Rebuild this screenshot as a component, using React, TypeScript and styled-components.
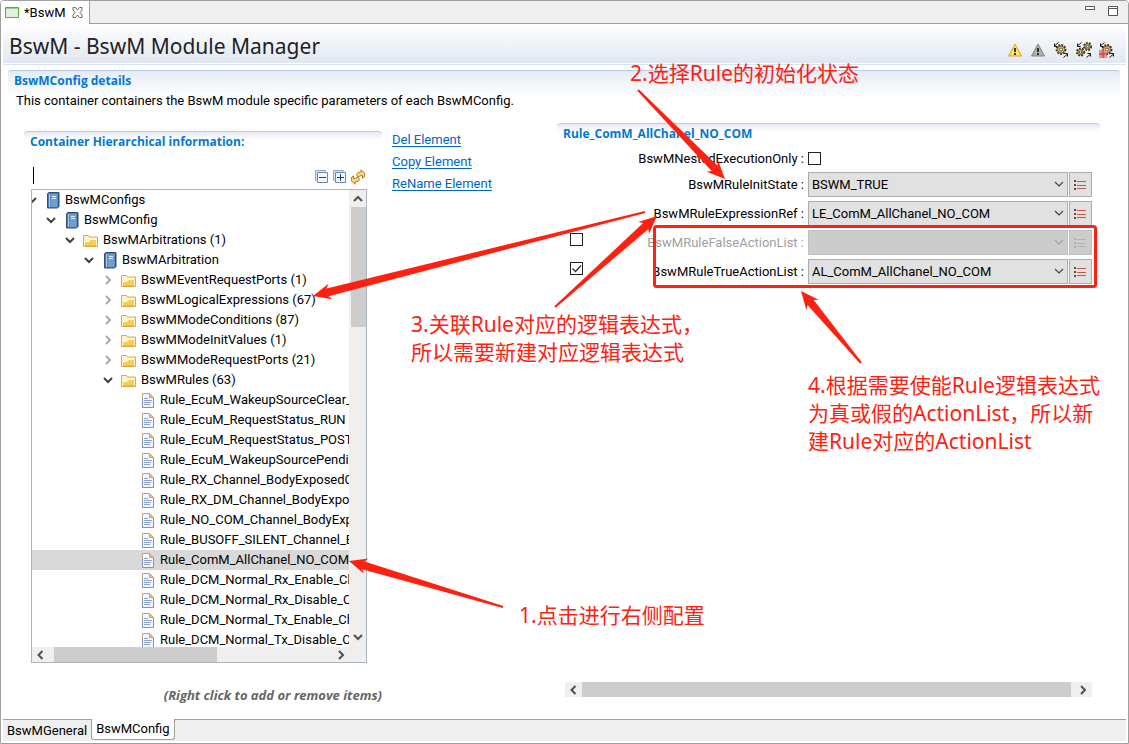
import React from 'react';
import styled, { createGlobalStyle } from 'styled-components';

const GlobalStyle = createGlobalStyle`
  * { box-sizing: border-box; }
  body { margin: 0; background: #fff; }
  body, button, input, select { font-family: Roboto, "Noto Sans CJK SC", sans-serif; font-size: 13px; color: #000; }
`;

const RED = '#fe2112';

const Window = styled.div`
  position: relative;
  display: flex;
  flex-direction: column;
  height: 100vh;
  min-height: 480px;
  border: 1px solid #9f9f9f;
  border-radius: 4px 4px 0 0;
  background: #fff;
  line-height: 20px;
  overflow: hidden;
`;

const TabBar = styled.header`
  display: flex;
  height: 23px;
  background: #efefef;
  border-bottom: 1px solid #9f9f9f;
`;

const EditorTab = styled.div`
  display: flex;
  align-items: center;
  height: 23px;
  width: 89px;
  padding: 0 6px 0 4px;
  background: #fff;
  border-right: 1px solid #9f9f9f;
`;

const TabTitle = styled.span`
  flex: 1;
  padding-left: 5px;
  white-space: nowrap;
`;

const IconButton = styled.button`
  display: flex;
  align-items: center;
  justify-content: center;
  padding: 0;
  border: 0;
  background: none;
`;

const WindowButtons = styled.div`
  display: flex;
  gap: 12px;
  margin-left: auto;
  padding: 5px 9px 0 0;
  align-items: flex-start;
`;

const FormHeader = styled.div`
  display: flex;
  align-items: center;
  justify-content: space-between;
  height: 39px;
  margin: 0 2px;
  padding: 4px 11px 0 6px;
  background: linear-gradient(#fff, #e1e7f1);
`;

const HeaderRule = styled.div`
  height: 2px;
  margin: 0 2px 5px;
  border-bottom: 1px solid #dae3f0;
`;

const Title = styled.h1`
  margin: 0;
  font-family: "Noto Sans", sans-serif;
  font-size: 21px;
  font-weight: 400;
  line-height: 28px;
  color: #222;
`;

const Tools = styled.div`
  display: flex;
  gap: 7px;
  padding-top: 8px;
`;

const Section = styled.section<{ $tint: number }>`
  border-top: 1px solid #b9cbe3;
  border-radius: 4px 4px 0 0;
  background: linear-gradient(#e6ebf4, #fff ${p => p.$tint}px);
`;

const Details = styled(Section)`
  display: flex;
  flex-direction: column;
  flex: 1;
  min-height: 0;
  margin: 0 8px 0 7px;
  padding-left: 6px;
`;

const SectionTitle = styled.h2`
  margin: 0;
  font-family: "Open Sans", sans-serif;
  font-size: 12px;
  font-weight: 700;
  line-height: 20px;
  color: #0078d7;
`;

const Description = styled.p`
  margin: 0;
  padding-left: 2px;
  line-height: 20px;
`;

const Body = styled.main`
  display: flex;
  flex: 1;
  min-height: 0;
`;

const TreePane = styled.div`
  display: flex;
  flex-direction: column;
  width: 358px;
  margin: 20px 0 0 10px;
  flex-shrink: 0;
`;

const GroupHead = styled(Section)`
  padding-left: 6px;
`;

const FilterRow = styled.div`
  display: flex;
  align-items: flex-end;
  height: 37px;
  padding: 0 16px 4px 9px;
`;

const Caret = styled.i`
  width: 1px;
  height: 17px;
  margin-bottom: 1px;
  background: #000;
`;

const Filter = styled.input`
  flex: 1;
  min-width: 0;
  height: 20px;
  padding: 0;
  border: 0;
  outline: 0;
  background: none;
`;

const FilterTools = styled.div`
  display: flex;
  gap: 2px;
`;

const TreeBox = styled.div`
  display: grid;
  grid-template: minmax(0, 1fr) 15px / minmax(0, 1fr) 16px;
  flex: 1;
  min-height: 0;
  margin: 0 15px 0 7px;
  border: 1px solid #abb5c0;
  background: #efefef;
`;

const Tree = styled.ul`
  margin: 0;
  padding: 0;
  list-style: none;
  background: #fff;
  overflow: hidden;
  margin-right: 1px;
`;

const TreeRow = styled.li<{ $selected?: boolean }>`
  height: 20px;
  background: ${p => (p.$selected ? '#d9d9d9' : 'none')};
`;

const TreeCell = styled.div<{ $level: number }>`
  display: flex;
  align-items: center;
  height: 20px;
  margin-left: ${p => p.$level * 19 - 10}px;
  white-space: nowrap;
`;

const TwistSlot = styled.span`
  display: flex;
  flex: none;
  width: 20px;
  justify-content: center;
`;

const IconSlot = styled.span`
  display: flex;
  flex: none;
  width: 15px;
  margin: 0 5px 0 3px;
  justify-content: center;
`;

const VerticalBar = styled.div`
  display: flex;
  flex-direction: column;
  align-items: center;
  justify-content: space-between;
  padding: 5px 0 6px;
`;

const VerticalThumb = styled.div`
  width: 15px;
  height: 27%;
  margin: 4px 0 auto;
  background: #cdcdcd;
`;

const HorizontalBar = styled.div`
  display: flex;
  align-items: center;
  padding: 0 4px;
  height: 15px;
  background: #efefef;
  svg { flex: none; }
`;

const TreeThumb = styled.div`
  width: 163px;
  height: 15px;
  margin: 0 auto 0 8px;
  background: #cdcdcd;
`;

const RuleThumb = styled.div`
  flex: 1;
  height: 15px;
  margin: 0 7px 0 3px;
  background: #cdcdcd;
`;

const Hint = styled.p`
  margin: 22px 0 14px;
  text-align: right;
  font-family: "Open Sans", sans-serif;
  font-weight: 700;
  font-style: italic;
  line-height: 20px;
  color: #666;
`;

const Links = styled.nav`
  display: flex;
  flex-direction: column;
  gap: 2px;
  width: 175px;
  padding: 19px 0 0 10px;
  flex-shrink: 0;
`;

const ActionLink = styled.a`
  color: #0066cc;
  text-underline-offset: 2px;
`;

const RulePane = styled.div`
  display: flex;
  flex-direction: column;
  flex: 1;
  min-width: 400px;
  margin: 12px 20px 22px 0;
`;

const Form = styled.form`
  display: flex;
  flex-direction: column;
  gap: 4px;
  padding: 5px 8px 0 13px;
`;

const Field = styled.div<{ $short?: boolean }>`
  display: grid;
  grid-template-columns: 14px 224px minmax(0, 1fr) 23px;
  align-items: center;
  height: ${p => (p.$short ? 16 : 25)}px;
  margin-bottom: ${p => (p.$short ? 3 : 0)}px;
`;

const Label = styled.label<{ $off?: boolean }>`
  grid-column: 2;
  padding-right: 4px;
  text-align: right;
  white-space: nowrap;
  color: ${p => (p.$off ? '#a0a0a0' : '#000')};
`;

const CheckBox = styled.span`
  display: grid;
  align-self: start;
  width: 13px;
  height: 13px;
  margin-top: 3px;
  svg { grid-area: 1 / 1; pointer-events: none; }
`;

const CheckInput = styled.input`
  grid-area: 1 / 1;
  appearance: none;
  width: 13px;
  height: 13px;
  margin: 0;
  border: 1px solid #222;
  background: #fff;
`;

const Combo = styled.span`
  display: grid;
  align-items: center;
  margin-right: 1px;
  svg { grid-area: 1 / 1; justify-self: end; margin-right: 4px; pointer-events: none; }
`;

const Select = styled.select`
  grid-area: 1 / 1;
  appearance: none;
  width: 100%;
  height: 25px;
  padding: 0 3px;
  border: 1px solid #adadad;
  border-radius: 0;
  background: #e1e1e1;
  &:disabled { background: #ccc; border-color: #bfbfbf; opacity: 1; }
`;

const ListButton = styled(IconButton)`
  width: 23px;
  height: 25px;
  border: 1px solid #adadad;
  background: #e1e1e1;
  &:disabled { background: #ccc; border-color: #bfbfbf; }
`;

const RuleScroll = styled(HorizontalBar)`
  margin: auto 8px 0;
`;

const Footer = styled.footer`
  display: flex;
  height: 22px;
  margin: 0 2px 2px;
  background: #efefef;
  border-top: 1px solid #9f9f9f;
`;

const PageTab = styled.button<{ $active?: boolean }>`
  height: 21px;
  margin-top: ${p => (p.$active ? '-1px' : '0')};
  padding: 0 4px;
  border: ${p => (p.$active ? '1px solid #9f9f9f' : '0')};
  border-top: 0;
  border-radius: 0 0 3px 3px;
  background: ${p => (p.$active ? '#fff' : 'none')};
  line-height: 20px;
`;

const Marks = styled.svg`
  position: absolute;
  left: -1px;
  top: -1px;
  pointer-events: none;
`;

const Note = styled.p<{ $x: number; $y: number }>`
  position: absolute;
  left: ${p => p.$x}px;
  top: ${p => p.$y}px;
  margin: 0;
  font-family: "Noto Sans", "Noto Sans CJK SC", sans-serif;
  font-size: 21px;
  line-height: 28px;
  white-space: nowrap;
  color: ${RED};
`;

const Book = () => (
  <svg width="14" height="17" viewBox="0 0 14 17">
    <path d="M1.5 1.5 3 .5h10v14l-1.500 1.500H1.500Z" fill="#4a7cb5" stroke="#33506f" />
    <path d="M3.500 2v13" stroke="#a9c8e8" />
    <path d="M4.500 2h7v13h-7z" fill="#6f9fd0" />
    <path d="M6 4.500h4M6 6.500h4" stroke="#e4eefa" />
    <path d="M12.500 2v13" stroke="#2f527c" />
  </svg>
);

const Folder = () => (
  <svg width="15" height="13" viewBox="0 0 15 13">
    <path d="M.5 1.500h5l1 1.500h8v9.500H.5Z" fill="#fdf3cf" stroke="#dba94f" />
    <path d="M2 11.500V7.500h4l1.500-2H13v6Z" fill="#f5cf55" />
    <path d="M2 7.500h4l1.500-2H13" fill="none" stroke="#fffbe8" />
    <path d="M2 11.500h11" stroke="#f0b93c" />
  </svg>
);

const Doc = () => (
  <svg width="13" height="15" viewBox="-1 0 13 15">
    <path d="M.5.5h7l4 4v10H.5Z" fill="#f3f7fd" />
    <path d="M.5 14V.5h7" fill="none" stroke="#b9a878" />
    <path d="M.5 6v8.500h11V4.500" fill="none" stroke="#7d92b8" />
    <path d="M7.500.5v4h4Z" fill="#e5c67a" stroke="#c8a556" />
    <path d="M2 5.500h4M2 7.500h8M2 9.500h7M2 11.500h6" stroke="#8ba4cf" />
  </svg>
);

const Twist = ({ open }: { open: boolean }) =>
  open ? (
    <svg width="10" height="7" viewBox="0 0 10 7"><path d="m1 1 4 4 4-4" fill="none" stroke="#404040" strokeWidth="2" /></svg>
  ) : (
    <svg width="7" height="10" viewBox="0 0 7 10"><path d="m1 1 4 4-4 4" fill="none" stroke="#a6a6a6" strokeWidth="1.800" /></svg>
  );

const ARROWS = { up: 'm1 6 4-4 4 4', down: 'm1 2 4 4 4-4', left: 'm6.500 1-4 4 4 4', right: 'm3 1 4 4-4 4' };
const ScrollArrow = ({ dir }: { dir: keyof typeof ARROWS }) => (
  <svg width="10" height={dir === 'up' || dir === 'down' ? 8 : 10}>
    <path d={ARROWS[dir]} fill="none" stroke="#505050" strokeWidth="2" />
  </svg>
);

const Warning = ({ grey }: { grey?: boolean }) => (
  <svg width="16" height="16" viewBox="0 0 16 16">
    <path d="M8 2 14.500 14h-13Z" fill={grey ? '#a9a9a9' : '#fbd84b'} stroke={grey ? '#858585' : '#dfa62f'} strokeLinejoin="round" />
    <path d="M8 4.500 12.500 13H4Z" fill={grey ? '#b4b4b4' : '#ffea6a'} />
    <path d="M8 6v4M8 11v2" stroke="#222" strokeWidth="1.800" />
  </svg>
);

const Gear = ({ x, y, r }: { x: number; y: number; r: number }) => (
  <g>
    <circle cx={x} cy={y} r={r} fill="none" stroke="#3a2e1c" strokeWidth="1.800" strokeDasharray="1.800 1.200" />
    <circle cx={x} cy={y} r={r - 0.9} fill="#f8c23c" stroke="#4a3a20" strokeWidth=".800" />
    <circle cx={x} cy={y} r={r / 3} fill="#fff" stroke="#3b3f63" strokeWidth=".900" />
  </g>
);

const Turns = () => (
  <g fill="none" stroke="#151515">
    <path d="M5.500.500 2 3.500M1.500 1.500v3H4.500" />
    <path d="M10.500 15.500l3.500-3M11.500 11.500h3V14.500" />
  </g>
);

const GearTool = ({ kind }: { kind: 'one' | 'two' | 'grid' }) => (
  <svg width="16" height="16" viewBox="0 0 16 16">
    {kind === 'two' ? (
      <>
        <Gear x={11.5} y={4.500} r={3.600} />
        <Gear x={4.500} y={10} r={3.600} />
      </>
    ) : (
      <Gear x={8} y={7.500} r={4.500} />
    )}
    <Turns />
    {kind === 'grid' && (
      <>
        <path d="M0 8h8v8H0z" fill="#e58f86" />
        <path d="M0 12h8M4 8v8" stroke="#b5382f" />
      </>
    )}
  </svg>
);

const Expander = ({ plus }: { plus?: boolean }) => (
  <svg width="16" height="16" viewBox="0 0 16 16">
    <path d="M1.500 12V1.500H12" fill="none" stroke="#8fa8cc" />
    <path d="M2 2h10v10H2z" fill="#d4e0f2" />
    <path d="M3.500 3.500h10v10h-10z" fill="#f1fbff" stroke="#6888b8" />
    <path d={plus ? 'M5 8.500h7M8.500 5v7' : 'M5 8.500h7'} stroke="#1b3f86" />
  </svg>
);

const Sync = () => (
  <svg width="16" height="16" viewBox="0 0 16 16" fill="#f9d878" stroke="#b0781d" strokeLinejoin="round">
    <path d="M6.500 5.500 8 3.500l3-.5V.800l4 3.700-1 4-1.500.500V6.500L9.500 7 8.500 8.500Z" />
    <path d="M9.500 10.500 8 12.500l-3 .5v2.200L1 11.500l1-4L3.500 7v2.500L6.500 9l1-1.500Z" />
  </svg>
);

const ListGlyph = ({ off }: { off?: boolean }) => (
  <svg width="14" height="12" viewBox="0 0 14 12">
    <path d="M0 2h2M0 6h2M0 10h2" stroke={off ? '#adadad' : '#7a3f33'} strokeWidth="2" />
    <path d="M3 2.500h9M3 6.500h9M3 9.500h9" stroke={off ? '#b3b3b3' : '#c9573f'} />
  </svg>
);

type Node = { level: number; icon: 'book' | 'folder' | 'doc'; text: string; open?: boolean; selected?: boolean };
const NODES: Node[] = [
  { level: 0, icon: 'book', text: 'BswMConfigs', open: true },
  { level: 1, icon: 'book', text: 'BswMConfig', open: true },
  { level: 2, icon: 'folder', text: 'BswMArbitrations (1)', open: true },
  { level: 3, icon: 'book', text: 'BswMArbitration', open: true },
  { level: 4, icon: 'folder', text: 'BswMEventRequestPorts (1)', open: false },
  { level: 4, icon: 'folder', text: 'BswMLogicalExpressions (67)', open: false },
  { level: 4, icon: 'folder', text: 'BswMModeConditions (87)', open: false },
  { level: 4, icon: 'folder', text: 'BswMModeInitValues (1)', open: false },
  { level: 4, icon: 'folder', text: 'BswMModeRequestPorts (21)', open: false },
  { level: 4, icon: 'folder', text: 'BswMRules (63)', open: true },
  { level: 5, icon: 'doc', text: 'Rule_EcuM_WakeupSourceClear_' },
  { level: 5, icon: 'doc', text: 'Rule_EcuM_RequestStatus_RUN' },
  { level: 5, icon: 'doc', text: 'Rule_EcuM_RequestStatus_POSTRUN' },
  { level: 5, icon: 'doc', text: 'Rule_EcuM_WakeupSourcePending' },
  { level: 5, icon: 'doc', text: 'Rule_RX_Channel_BodyExposedCAN' },
  { level: 5, icon: 'doc', text: 'Rule_RX_DM_Channel_BodyExposed' },
  { level: 5, icon: 'doc', text: 'Rule_NO_COM_Channel_BodyExposed' },
  { level: 5, icon: 'doc', text: 'Rule_BUSOFF_SILENT_Channel_Body' },
  { level: 5, icon: 'doc', text: 'Rule_ComM_AllChanel_NO_COM', selected: true },
  { level: 5, icon: 'doc', text: 'Rule_DCM_Normal_Rx_Enable_Channel' },
  { level: 5, icon: 'doc', text: 'Rule_DCM_Normal_Rx_Disable_Channel' },
  { level: 5, icon: 'doc', text: 'Rule_DCM_Normal_Tx_Enable_Channel' },
  { level: 5, icon: 'doc', text: 'Rule_DCM_Normal_Tx_Disable_Channel' },
];
const ICONS = { book: Book, folder: Folder, doc: Doc };

const FIELDS = [
  { name: 'BswMRuleInitState', value: 'BSWM_TRUE' },
  { name: 'BswMRuleExpressionRef', value: 'LE_ComM_AllChanel_NO_COM' },
  { name: 'BswMRuleFalseActionList', value: '', toggle: true, off: true },
  { name: 'BswMRuleTrueActionList', value: 'AL_ComM_AllChanel_NO_COM', toggle: true },
];

const Check = ({ id, label, on }: { id?: string; label?: string; on?: boolean }) => (
  <CheckBox>
    <CheckInput type="checkbox" id={id} aria-label={label} defaultChecked={on} />
    {on && <svg width="13" height="13"><path d="m2.500 6.500 3 3 5.500-6" fill="none" stroke="#333" strokeWidth="1.400" /></svg>}
  </CheckBox>
);

const arrow = (x1: number, y1: number, x2: number, y2: number) => {
  const len = Math.hypot(x2 - x1, y2 - y1);
  const ux = (x2 - x1) / len;
  const uy = (y2 - y1) / len;
  const at = (back: number, side: number) => `${x2 - ux * back - uy * side},${y2 - uy * back + ux * side}`;
  return [at(0, 0), at(18, 8), at(15, 4), at(len, 1), at(len, -1), at(15, -4), at(18, -8)].join(' ');
};
const POINTERS: [number, number, number, number][] = [
  [503, 607, 349, 561],
  [638, 90, 725, 179],
  [645, 212, 313, 296],
  [555, 307, 657, 216],
  [861, 363, 801, 291],
];

export default function App() {
  return (
    <Window>
      <GlobalStyle />
      <TabBar>
        <EditorTab>
          <svg width="14" height="11"><path d="M.5.5h13v10H.5z" fill="#dff2dc" stroke="#5aa84e" /><path d="M1 1.500h12" stroke="#8fcf86" /></svg>
          <TabTitle>*BswM</TabTitle>
          <IconButton aria-label="Close">
            <svg width="11" height="11"><path d="M1 .5h2.500l2 2.500 2-2.500H10v2.500L8 5.500l2 2.500v2.500H7.500l-2-2.500-2 2.500H1V8l2-2.500L1 3Z" fill="#fff" stroke="#6a6a6a" /></svg>
          </IconButton>
        </EditorTab>
        <WindowButtons>
          <IconButton aria-label="Minimize"><svg width="11" height="5"><path d="M.5.5h9v3h-9z" fill="#fff" stroke="#555" /></svg></IconButton>
          <IconButton aria-label="Maximize"><svg width="11" height="11"><path d="M.5.5h9v9h-9zM.5 2.500h9" fill="#fff" stroke="#555" /></svg></IconButton>
        </WindowButtons>
      </TabBar>
      <FormHeader>
        <Title>BswM - BswM Module Manager</Title>
        <Tools>
          <IconButton aria-label="Show warnings"><Warning /></IconButton>
          <IconButton aria-label="Hidden warnings"><Warning grey /></IconButton>
          <IconButton aria-label="Generate"><GearTool kind="one" /></IconButton>
          <IconButton aria-label="Generate all"><GearTool kind="two" /></IconButton>
          <IconButton aria-label="Generate table"><GearTool kind="grid" /></IconButton>
        </Tools>
      </FormHeader>
      <HeaderRule />
      <Details $tint={26}>
        <SectionTitle>BswMConfig details</SectionTitle>
        <Description>This container containers the BswM module specific parameters of each BswMConfig.</Description>
        <Body>
          <TreePane>
            <GroupHead $tint={8}><SectionTitle>Container Hierarchical information:</SectionTitle></GroupHead>
            <FilterRow>
              <Caret />
              <Filter type="text" aria-label="Filter tree" />
              <FilterTools>
                <IconButton aria-label="Collapse all"><Expander /></IconButton>
                <IconButton aria-label="Expand all"><Expander plus /></IconButton>
                <IconButton aria-label="Refresh"><Sync /></IconButton>
              </FilterTools>
            </FilterRow>
            <TreeBox>
              <Tree>
                {NODES.map(n => {
                  const Icon = ICONS[n.icon];
                  return (
                    <TreeRow key={n.text} $selected={n.selected}>
                      <TreeCell $level={n.level}>
                        <TwistSlot>{n.open !== undefined && <Twist open={n.open} />}</TwistSlot>
                        <IconSlot><Icon /></IconSlot>
                        {n.text}
                      </TreeCell>
                    </TreeRow>
                  );
                })}
              </Tree>
              <VerticalBar><ScrollArrow dir="up" /><VerticalThumb /><ScrollArrow dir="down" /></VerticalBar>
              <HorizontalBar><ScrollArrow dir="left" /><TreeThumb /><ScrollArrow dir="right" /></HorizontalBar>
            </TreeBox>
            <Hint>(Right click to add or remove items)</Hint>
          </TreePane>
          <Links>
            <span><ActionLink href="#del">Del Element</ActionLink></span>
            <span><ActionLink href="#copy">Copy Element</ActionLink></span>
            <span><ActionLink href="#rename">ReName Element</ActionLink></span>
          </Links>
          <RulePane>
            <GroupHead $tint={8}><SectionTitle>Rule_ComM_AllChanel_NO_COM</SectionTitle></GroupHead>
            <Form>
              <Field $short>
                <Label htmlFor="nested">BswMNestedExecutionOnly :</Label>
                <Check id="nested" />
              </Field>
              {FIELDS.map(f => (
                <Field key={f.name}>
                  {f.toggle && <Check label={`Use ${f.name}`} on={!f.off} />}
                  <Label htmlFor={f.name} $off={f.off}>{f.name} :</Label>
                  <Combo>
                    <Select id={f.name} disabled={f.off} defaultValue={f.value}><option>{f.value}</option></Select>
                    <svg width="10" height="7"><path d="m1 1 4 4 4-4" fill="none" stroke={f.off ? '#a0a0a0' : '#444'} strokeWidth="1.200" /></svg>
                  </Combo>
                  <ListButton type="button" aria-label={`Choose ${f.name}`} disabled={f.off}><ListGlyph off={f.off} /></ListButton>
                </Field>
              ))}
            </Form>
            <RuleScroll><ScrollArrow dir="left" /><RuleThumb /><ScrollArrow dir="right" /></RuleScroll>
          </RulePane>
        </Body>
      </Details>
      <Footer>
        <PageTab>BswMGeneral</PageTab>
        <PageTab $active>BswMConfig</PageTab>
      </Footer>
      <Marks width="1129" height="744" fill={RED}>
        {POINTERS.map(p => <polygon key={p.join()} points={arrow(...p)} />)}
        <rect x="654.500" y="226.500" width="441" height="60" rx="2" fill="none" stroke={RED} strokeWidth="3" />
      </Marks>
      <Note $x={518} $y={600}>1.点击进行右侧配置</Note>
      <Note $x={629} $y={58}>2.选择Rule的初始化状态</Note>
      <Note $x={410} $y={309}>3.关联Rule对应的逻辑表达式，<br />所以需要新建对应逻辑表达式</Note>
      <Note $x={807} $y={370}>4.根据需要使能Rule逻辑表达式<br />为真或假的ActionList，所以新<br />建Rule对应的ActionList</Note>
    </Window>
  );
}
